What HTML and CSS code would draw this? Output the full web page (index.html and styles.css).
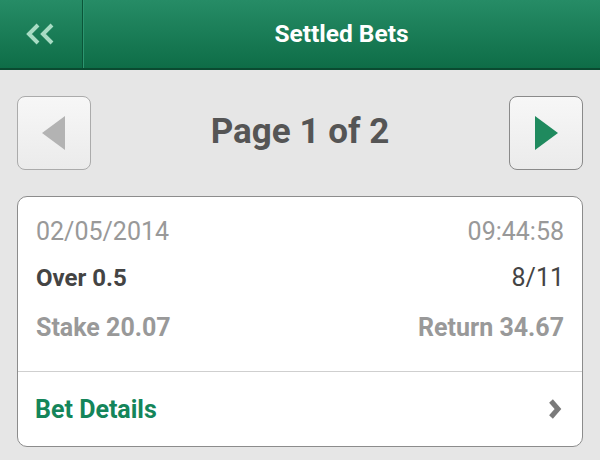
FILE: index.html
```html
<!DOCTYPE html>
<html lang="en">
<head>
  <meta charset="UTF-8">
  <meta name="viewport" content="width=device-width, initial-scale=1.0">
  <title>Settled Bets</title>
  <link rel="stylesheet" href="styles.css">
</head>
<body>
  <div class="header">
    <a class="back-btn" href="#">
      <svg width="32" height="24" viewBox="0 0 32 24">
        <polyline points="13,3 4,12 13,21" fill="none" stroke="#a8dcc4" stroke-width="4"/>
        <polyline points="27,3 18,12 27,21" fill="none" stroke="#a8dcc4" stroke-width="4"/>
      </svg>
    </a>
    <h1>Settled Bets</h1>
  </div>
  <div class="container">
    <div class="pager">
      <button type="button" class="page-btn disabled">
        <svg width="24" height="34" viewBox="0 0 24 34"><polygon points="23,0 23,34 0,17" fill="#b3b3b3"/></svg>
      </button>
      <div class="page-label">Page 1 of 2</div>
      <button type="button" class="page-btn">
        <svg width="24" height="34" viewBox="0 0 24 34"><polygon points="1,0 1,34 24,17" fill="#1f8a5e"/></svg>
      </button>
    </div>
    <div class="bet-card">
      <div class="bet-info">
        <div class="row date">
          <span>02/05/2014</span>
          <span>09:44:58</span>
        </div>
        <div class="row selection">
          <span class="name">Over 0.5</span>
          <span class="odds">8/11</span>
        </div>
        <div class="row stake">
          <span>Stake 20.07</span>
          <span>Return 34.67</span>
        </div>
      </div>
      <a class="bet-details" href="#">
        <span>Bet Details</span>
        <svg width="14" height="22" viewBox="0 0 14 22"><polyline points="3,3 10,11 3,19" fill="none" stroke="#7a7a7a" stroke-width="5"/></svg>
      </a>
    </div>
  </div>
</body>
</html>
```
FILE: styles.css
```css
/* Global */
body {
  font-family: Roboto, 'Noto Sans', sans-serif;
  background: #e6e6e6;
  margin: 0;
  padding: 0;
  color: #444;
}
/* Header hijau */
.header {
  display: flex;
  height: 68px;
  background: linear-gradient(to bottom, #268c66, #0e6d47);
  border-bottom: 2px solid #0a4a30;
}
.back-btn {
  display: flex;
  align-items: center;
  justify-content: center;
  width: 82px;
  border-right: 1px solid #0b5538;
  box-shadow: 1px 0 0 #2c9670;
}
.header h1 {
  flex: 1;
  margin: 0;
  color: #fff;
  font-size: 24.5px;
  font-weight: 700;
  line-height: 68px;
  text-align: center;
}
.container {
  padding: 26px 17px 0 17px;
}
/* Navigasi halaman */
.pager {
  display: flex;
  align-items: center;
  justify-content: space-between;
}
.page-btn {
  width: 74px;
  height: 74px;
  display: flex;
  align-items: center;
  justify-content: center;
  background: linear-gradient(to bottom, #f7f7f7, #ebebeb);
  border: 1px solid #8a8a8a;
  border-radius: 8px;
  padding: 0;
}
.page-btn.disabled {
  border-color: #ababab;
}
.page-label {
  font-size: 35px;
  font-weight: 700;
  color: #555;
  margin-top: -3px;
}
/* Kartu taruhan */
.bet-card {
  margin-top: 26px;
  background: #fff;
  border: 1px solid #8c8c8c;
  border-radius: 10px;
}
.bet-info {
  padding: 12px 18px 20px 18px;
  border-bottom: 1px solid #cfcfcf;
}
.row {
  display: flex;
  justify-content: space-between;
  line-height: 46px;
}
.row.date {
  font-size: 25px;
  color: #999;
}
.row.selection {
  font-size: 25px;
}
.row.selection .name {
  font-size: 24px;
  font-weight: 700;
}
.row.stake {
  margin-top: 4px;
  font-size: 25px;
  font-weight: 700;
  color: #999;
}
.bet-details {
  display: flex;
  align-items: center;
  justify-content: space-between;
  height: 74px;
  padding: 0 20px 0 17px;
  text-decoration: none;
  color: #14855a;
  font-size: 25px;
  font-weight: 700;
}
```
